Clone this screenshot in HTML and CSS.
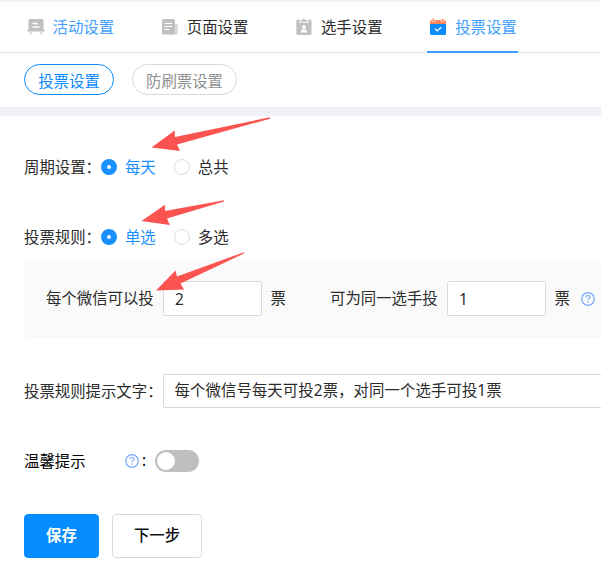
FILE: index.html
```html
<!DOCTYPE html>
<html lang="zh-CN">
<head>
<meta charset="utf-8">
<title>投票设置</title>
<link rel="stylesheet" href="styles.css">
</head>
<body>
<div class="page">
  <nav class="tabs">
    <a class="tab visited">
      <svg class="icon" viewBox="0 0 18 18"><path fill="#c0c0c0" d="M3 1h12q1.500 0 1.500 1.500V11.500H17.500v2H.5v-2H1.500V2.500Q1.500 1 3 1z"/><path d="M5.500 5.500h5M5.500 9h7" stroke="#fff" stroke-width="1.400"/><path d="M5 13.500L3 16.500M13 13.500l2 3" stroke="#d0d0d0" stroke-width="1.500"/></svg>
      <span>活动设置</span>
    </a>
    <a class="tab">
      <svg class="icon" viewBox="0 0 18 18"><rect x="8" y="6" width="9" height="10.500" rx="1.500" fill="#dcdcdc"/><rect x="1" y="1" width="13" height="15.500" rx="1.500" fill="#c0c0c0"/><path d="M3.500 5.500h7.500M3.500 8.500h7.500M3.500 11.500h5" stroke="#fff" stroke-width="1.100"/></svg>
      <span>页面设置</span>
    </a>
    <a class="tab">
      <svg class="icon" viewBox="0 0 18 18"><rect x="1.300" y="1.500" width="15.200" height="15.500" rx="1.500" fill="#c0c0c0"/><path fill="#fff" d="M4.300 1h9.200v3.700H4.300z"/><path fill="#c8c8c8" d="M5.500 2h1.700q1.700-2.400 3.400 0h1.700v2H5.500z"/><circle cx="8.900" cy="8.900" r="1.900" fill="#fff"/><path fill="#fff" d="M5.600 14.500q.3-3.500 3.300-3.500t3.300 3.500z"/></svg>
      <span>选手设置</span>
    </a>
    <a class="tab active">
      <svg class="icon" viewBox="0 0 18 18"><path fill="#ff8354" d="M1 6V3.500Q1 2 2.500 2h13Q17 2 17 3.500V6z"/><path fill="#0a8cff" d="M1 6h16v9.500q0 1.500-1.500 1.500h-13Q1 17 1 15.500z"/><path d="M3 1v2.500h3V1M12 1v2.500h3V1" stroke="#fff" stroke-width=".7" fill="none"/><path d="M4.500.7v2.600M13.500.7v2.600" stroke="#ff8354" stroke-width="1.600"/><path d="M6 10.700l2.300 2.200 4-3.700" stroke="#fff" stroke-width="1.300" fill="none"/></svg>
      <span>投票设置</span>
    </a>
  </nav>
  <div class="pills">
    <span class="pill on">投票设置</span>
    <span class="pill">防刷票设置</span>
  </div>
  <main class="form">
    <div class="row">
      <span class="label">周期设置：</span>
      <span class="radio checked"></span><span class="option chosen">每天</span>
      <span class="radio"></span><span class="option">总共</span>
    </div>
    <div class="row rule">
      <span class="label">投票规则：</span>
      <span class="radio checked"></span><span class="option chosen">单选</span>
      <span class="radio"></span><span class="option">多选</span>
    </div>
    <div class="panel">
      <span class="before">每个微信可以投</span>
      <span class="input number">2</span>
      <span class="unit">票</span>
      <span class="before second">可为同一选手投</span>
      <span class="input number">1</span>
      <span class="unit">票</span>
      <svg class="help" viewBox="0 0 14 14"><circle cx="7" cy="7" r="6.300"/><path d="M5 5.500q0-2 2-2t2 1.800c0 1.300-2 1.400-2 3M7 9.500v1.300"/></svg>
    </div>
    <div class="row tip">
      <span class="label">投票规则提示文字：</span>
      <span class="input wide">每个微信号每天可投2票，对同一个选手可投1票</span>
    </div>
    <div class="row reminder">
      <span class="label">温馨提示</span>
      <svg class="help" viewBox="0 0 14 14"><circle cx="7" cy="7" r="6.300"/><path d="M5 5.500q0-2 2-2t2 1.800c0 1.300-2 1.400-2 3M7 9.500v1.300"/></svg>
      <span class="colon">:</span>
      <span class="switch"></span>
    </div>
    <div class="actions">
      <span class="button primary">保存</span>
      <span class="button">下一步</span>
    </div>
  </main>
  <svg class="arrows" viewBox="0 0 601 573" fill="#fb5350">
    <path d="M270 117.300L175 137l-.3-6.500L151.500 147.500l28.500 3.500-3-6.500 93-25.800z"/>
    <path d="M224 200.200L165 211l0-6.300L141.500 221l28.300 4-2.800-6.500L224 201.500z"/>
    <path d="M244 252.200L177 276.500l-1.500-6L156 290.500l28-1-3.500-6L244 253.500z"/>
  </svg>
</div>
</body>
</html>
```
FILE: styles.css
```css
* { box-sizing: border-box; }
body {
  margin: 0;
  background: #fff;
  color: #2b2b2b;
  font: 15.4px/22px "Noto Sans", "Noto Sans CJK SC", sans-serif;
}
.page {
  position: relative;
  width: 601px;
  height: 573px;
  overflow: hidden;
  white-space: nowrap;
}
.tabs {
  display: flex;
  gap: 43.2px;
  height: 53px;
  padding-left: 24.4px;
  border-top: 2px solid #eef2f6;
  border-bottom: 1px solid #dfe4ed;
}
.tab {
  display: flex;
  align-items: center;
  gap: 8px;
  width: 91px;
  height: 51px;
  padding-left: 2.200px;
  border-bottom: 2px solid transparent;
}
.tab span { padding-top: 2px; }
.visited, .active { color: #409eff; }
.active { border-color: #409eff; }
.icon { flex: none; width: 18px; height: 18px; margin-top: 1px; }
.pills {
  display: flex;
  gap: 18px;
  height: 63px;
  padding: 11px 24px 0;
  border-bottom: 9px solid #eef2f6;
}
.pill {
  width: 105px;
  height: 31px;
  padding-top: 1px;
  border: 1px solid #d9d9d9;
  border-radius: 16px;
  color: #909090;
  line-height: 31px;
  text-align: center;
}
.pill.on { width: 90px; border-color: #0a8cff; color: #0a8cff; }
.form { padding: 40px 0 0 24px; }
.row { display: flex; align-items: center; height: 22px; }
.label { flex: none; }
.row .label, .option { position: relative; top: 1px; }
.rule { margin-top: 48px; }
.radio {
  width: 16px;
  height: 16px;
  border: 1px solid #d9d9d9;
  border-radius: 50%;
  background: #fff;
}
.radio.checked { border: 6px solid #1890ff; }
.option { margin: 0 18px 0 8px; }
.chosen { color: #1890ff; }
.panel {
  display: flex;
  align-items: center;
  height: 79px;
  margin-top: 11px;
  padding-left: 22px;
  border-radius: 4px 0 0 4px;
  background: #fafafa;
}
.before { flex: none; width: 117px; }
.input {
  flex: none;
  border: 1px solid #d9d9d9;
  border-radius: 2px;
  background: #fff;
  padding-left: 11px;
}
.number { width: 99px; height: 35px; line-height: 35px; }
.unit { width: 27px; margin-left: 8.500px; margin-right: -.5px; }
.second { margin-left: 33px; }
.help {
  flex: none;
  width: 14px;
  height: 14px;
  fill: none;
  stroke: #79a7ff;
  stroke-width: 1.200;
}
.tip { height: 34px; margin-top: 36px; }
.wide { width: 460px; height: 34px; line-height: 32px; letter-spacing: .08px; }
.reminder { margin-top: 42px; color: #000; }
.reminder .label { width: 101px; }
.colon { width: 16px; padding-left: 3px; }
.switch {
  display: flex;
  align-items: center;
  width: 44px;
  height: 22px;
  padding: 0 2px;
  border-radius: 11px;
  background: #bfbfbf;
}
.switch::before {
  content: "";
  width: 18px;
  height: 18px;
  border-radius: 50%;
  background: #fff;
}
.actions { display: flex; gap: 13px; margin-top: 42px; }
.button {
  width: 90px;
  height: 44px;
  border: 1px solid #d9d9d9;
  border-radius: 4px;
  color: #111;
  font-weight: 500;
  line-height: 42px;
  text-align: center;
}
.primary { width: 75px; border-color: #058cff; background: #058cff; color: #fff; font-weight: 700; }
.arrows {
  position: absolute;
  top: 0;
  left: 0;
  width: 601px;
  height: 573px;
}
```
